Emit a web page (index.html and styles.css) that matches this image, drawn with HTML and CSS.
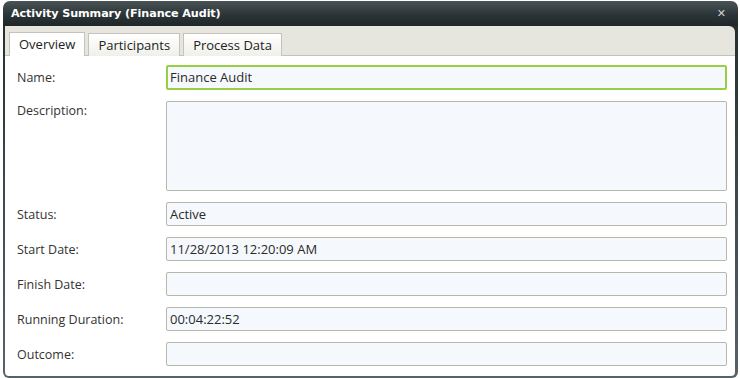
FILE: index.html
```html
<!DOCTYPE html>
<html>
<head>
<meta charset="utf-8">
<link rel="stylesheet" href="styles.css">
</head>
<body>
<div class="window">
  <div class="titlebar">
    <span class="title">Activity Summary (Finance Audit)</span>
    <span class="close">&#x2715;</span>
  </div>
  <div class="frame">
    <div class="tabs">
      <div class="tab active">Overview</div>
      <div class="tab">Participants</div>
      <div class="tab">Process Data</div>
    </div>
    <div class="content">
      <div class="label">Name:</div>
      <div class="field focus">Finance Audit</div>
      <div class="label top">Description:</div>
      <div class="field area"></div>
      <div class="label">Status:</div>
      <div class="field">Active</div>
      <div class="label">Start Date:</div>
      <div class="field">11/28/2013 12:20:09 AM</div>
      <div class="label">Finish Date:</div>
      <div class="field"></div>
      <div class="label">Running Duration:</div>
      <div class="field">00:04:22:52</div>
      <div class="label">Outcome:</div>
      <div class="field"></div>
    </div>
  </div>
</div>
</body>
</html>
```
FILE: styles.css
```css
html, body {
  margin: 0;
  padding: 0;
  background: #ffffff;
}
body {
  font-family: "Open Sans", "Noto Sans", sans-serif;
  font-size: 12.5px;
  color: #333333;
}
.window {
  margin-left: 3px;
  width: 735px;
  height: 377px;
  display: flex;
  flex-direction: column;
  padding-top: 1px;
}
.titlebar {
  height: 25px;
  flex: none;
  display: flex;
  align-items: center;
  justify-content: space-between;
  padding: 0 12px 0 8px;
  background: linear-gradient(#4a5457, #2b3437 55%, #1e2628);
  border-radius: 7px 7px 0 0;
}
.title {
  font-family: "DejaVu Sans", sans-serif;
  font-weight: bold;
  font-size: 11.2px;
  color: #ffffff;
  letter-spacing: -0.1px;
}
.close {
  font-family: "DejaVu Sans", sans-serif;
  font-weight: bold;
  font-size: 11px;
  color: #cfd3d3;
}
.frame {
  flex: 1;
  display: flex;
  flex-direction: column;
  padding: 0 3px 2px 2px;
  border-radius: 0 0 6px 6px;
  background: linear-gradient(#263032, #56646a);
}
.tabs {
  height: 29px;
  flex: none;
  display: flex;
  align-items: flex-end;
  gap: 3px;
  padding-left: 4px;
  background: #e6e6de;
  border-bottom: 1px solid #c3c3bb;
  border-radius: 0 6px 0 0;
}
.tab {
  height: 22px;
  line-height: 22px;
  padding: 0 9px;
  border: 1px solid #c3c3bb;
  border-bottom: none;
  background: linear-gradient(#ffffff, #f0f0ea);
  color: #222222;
  font-size: 13px;
  margin-bottom: -1px;
}
.tab.active {
  background: #ffffff;
  height: 23px;
}
.content {
  flex: 1;
  background: #ffffff;
  border-radius: 0 0 4px 4px;
  padding: 9px 8px 0 12px;
  display: grid;
  grid-template-columns: 149px 1fr;
  grid-auto-rows: 24px;
  grid-template-rows: 25px 90px;
  row-gap: 11px;
  align-items: center;
  align-content: start;
}
.label {
  font-size: 12.5px;
  color: #333333;
}
.label.top {
  align-self: start;
  line-height: 20px;
}
.field {
  box-sizing: border-box;
  height: 24px;
  line-height: 22px;
  border: 1px solid #b5b7a7;
  border-radius: 2px;
  background: #f5f9fd;
  padding: 0 3px;
  color: #2a2a2a;
  font-size: 13px;
}
.field.focus {
  height: 25px;
  border: 2px solid #97d043;
  line-height: 21px;
  padding: 0 2px;
}
.field.area {
  height: 90px;
}
```
